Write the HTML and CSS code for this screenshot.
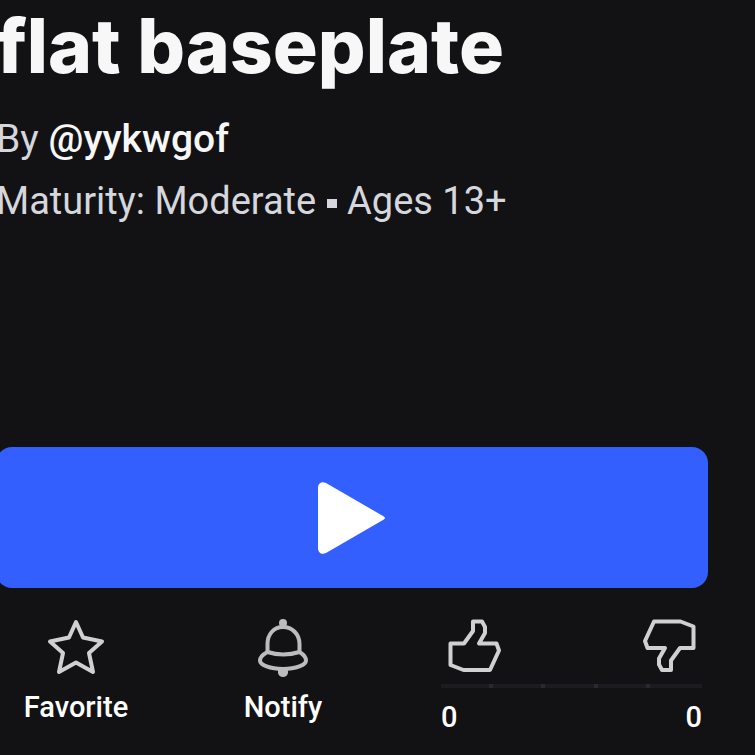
FILE: index.html
```html
<!DOCTYPE html>
<html lang="en">
<head>
    <meta charset="UTF-8">
    <meta name="viewport" content="width=device-width, initial-scale=1.0">
    <title>flat baseplate</title>
    <link rel="stylesheet" href="styles.css">
</head>
<body>
    <main class="game">
        <div class="game-info">
            <h1 class="game-name">flat baseplate</h1>
            <p class="game-creator">By <a href="#creator">@yykwgof</a></p>
            <p class="game-maturity">Maturity: Moderate <span class="dot"></span> Ages 13+</p>
        </div>
        <button class="play-button" type="button" aria-label="Play">
            <svg class="play-icon" viewBox="0 0 72 72">
                <path d="M2 6C2 1 6 -1 10 1L67 34Q71 36 67 38L10 71C6 73 2 71 2 66Z"/>
            </svg>
        </button>
        <div class="actions">
            <button class="action" type="button">
                <svg class="icon" viewBox="0 0 60 60">
                    <path d="M30 4L37 19.5L56 23.5L43 35L47 54L30 44.5L13 54L17 35L4 23.5L23 19.5Z"/>
                </svg>
                <span>Favorite</span>
            </button>
            <button class="action" type="button">
                <svg class="icon icon-bell" viewBox="0 0 60 60">
                    <path d="M14.5 35V26C14.5 16 21 9 30 9S46.5 16 46.5 26V35"/>
                    <path d="M14.5 34Q30 39 46.5 34Q53 38 53 42.5C53 47 43 51 30 51S7 47 7 42.5Q7 38 14.5 34Z"/>
                    <circle class="solid" cx="30" cy="5" r="4"/>
                    <path class="solid" d="M25 51H35V55Q34 59 30 59T25 55Z"/>
                </svg>
                <span>Notify</span>
            </button>
            <div class="votes">
                <div class="vote-buttons">
                    <button class="vote" type="button" aria-label="Like">
                        <svg class="icon" viewBox="0 0 60 60">
                            <path d="M29 3.5H38L41 9V15L35 25.5H52.5L55 32.5L46 52H19.5L6.5 47V25.5H20L29 13Z"/>
                        </svg>
                    </button>
                    <button class="vote" type="button" aria-label="Dislike">
                        <svg class="icon" viewBox="0 0 60 60">
                            <path d="M32 52H23L20 46.5V40.5L26 30H8.5L6 23L15 3.5H41.5L54.5 8.5V30H41L32 42.5Z"/>
                        </svg>
                    </button>
                </div>
                <div class="vote-bar">
                    <span></span><span></span><span></span><span></span><span></span>
                </div>
                <div class="vote-counts">
                    <span>0</span>
                    <span>0</span>
                </div>
            </div>
        </div>
    </main>
</body>
</html>
```
FILE: styles.css
```css
* {
    box-sizing: border-box;
}
body {
    margin: 0;
    background-color: #121214;
    color: #d5d7dd;
    font-family: Roboto, Arial, sans-serif;
    overflow-x: hidden;
}
button {
    padding: 0;
    border: none;
    background: none;
    color: inherit;
    font: inherit;
    cursor: pointer;
}
svg {
    display: block;
}
.game {
    margin-left: -4px;
    padding-right: 47px;
}
.game-info {
    min-height: 447px;
    padding-top: 4px;
}
.game-name {
    margin: 0 0 24px;
    color: #f7f7f8;
    font-family: Inter, sans-serif;
    font-size: 75px;
    font-weight: 800;
    line-height: 84px;
    white-space: nowrap;
}
.game-creator, .game-maturity {
    margin: 0;
    font-size: 38px;
    line-height: 54px;
}
.game-creator {
    margin-bottom: 8px;
    font-size: 39px;
}
.game-creator a {
    color: #f7f7f8;
    font-weight: 500;
    text-decoration: none;
}
.dot {
    display: inline-block;
    width: 10px;
    height: 9px;
    margin: 0 1px;
    background: #d5d7dd;
    vertical-align: middle;
}
.play-button {
    display: flex;
    justify-content: center;
    align-items: center;
    width: 100%;
    height: 141px;
    border-radius: 16px;
    background: #335fff;
}
.play-icon {
    width: 72px;
    height: 72px;
    fill: #fff;
}
.actions {
    display: grid;
    grid-template-columns: 160fr 254fr 298fr;
    align-items: start;
    padding-top: 30px;
}
.action {
    display: flex;
    flex-direction: column;
    align-items: center;
    gap: 10px;
    color: #fff;
    font-size: 29px;
    font-weight: 500;
    line-height: 38px;
}
.icon {
    width: 60px;
    height: 60px;
    fill: none;
    stroke: #d0d0d1;
    stroke-width: 4;
    stroke-linejoin: round;
}
.icon-bell {
    stroke: #bcbcbd;
}
.icon .solid {
    fill: #bcbcbd;
    stroke: none;
}
.votes {
    padding: 0 6px 0 31px;
}
.vote-buttons {
    display: flex;
    justify-content: space-between;
    padding: 0 3px;
}
.vote-bar {
    display: flex;
    height: 4px;
    margin: 6px 0 10px;
    background: #1b1b20;
}
.vote-bar span {
    width: 20%;
}
.vote-bar span:not(:last-child) {
    border-right: 4px solid #292930;
}
.vote-counts {
    display: flex;
    justify-content: space-between;
    color: #fff;
    font-size: 29px;
    font-weight: 500;
    line-height: 38px;
}
```
